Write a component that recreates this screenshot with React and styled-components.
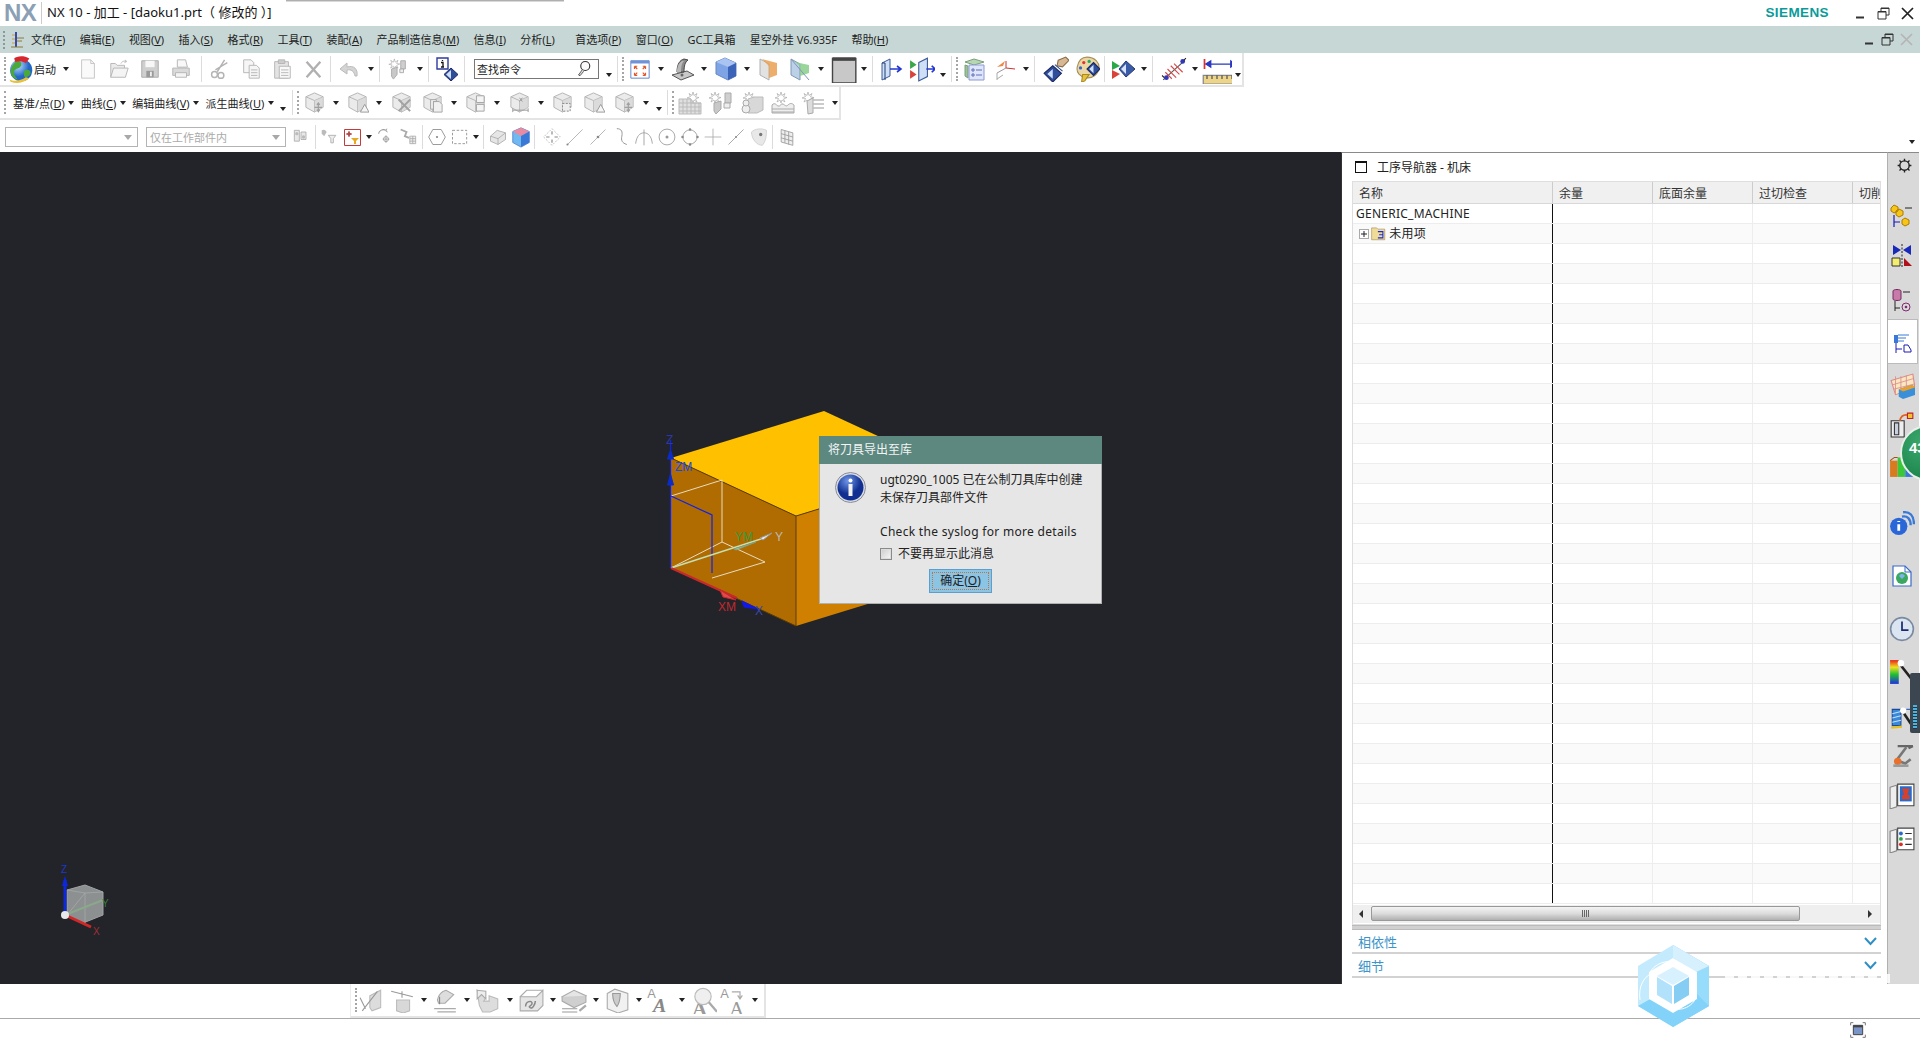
import React from 'react';
import styled, { createGlobalStyle } from 'styled-components';

const Global = createGlobalStyle`
  html, body { margin: 0; padding: 0; width: 1920px; height: 1040px; overflow: hidden; background: #fff; }
  body { font-family: "Noto Sans", "Noto Sans CJK SC", sans-serif; font-size: 11px; color: #222; }
  #root { width: 1920px; height: 1040px; }
`;
const Page = styled.div`position: relative; width: 1920px; height: 1040px; display: flex; flex-direction: column; overflow: hidden;`;
const TitleBar = styled.header`height: 26px; flex: none; display: flex; align-items: center; background: #fff; position: relative;`;
const TopShadow = styled.div`position: absolute; left: 286px; top: 0; width: 278px; height: 2px; background: linear-gradient(#999, #eee);`;
const Logo = styled.div`width: 37px; margin-left: 4px; font: bold 24px/26px "Liberation Sans", sans-serif; color: #8ba0b4; letter-spacing: -0.5px;`;
const TitleSep = styled.div`width: 1px; height: 22px; background: #ccc; margin-right: 5px;`;
const TitleText = styled.div`font: 13px/25px "Noto Sans", "Noto Sans CJK SC", sans-serif; color: #111; white-space: nowrap; align-self: flex-start;`;
const Brand = styled.div`margin-left: auto; font: bold 13.5px/26px "Liberation Sans", sans-serif; color: #0a9a9a; letter-spacing: 0.4px;`;
const WinBtns = styled.div`display: flex; align-items: center; margin-left: ${p => p.$ml}; margin-right: ${p => p.$mr}px; gap: ${p => p.$gap}px;`;
const MenuBar = styled.nav`height: 27px; flex: none; display: flex; align-items: center; background: #c7d7d5; padding-left: 3px;`;
const MenuGrip = styled.div`width: 3px; height: 18px; border-left: 2px dotted #8a9a98; margin-right: 1px;`;
const MenuList = styled.div`display: flex; gap: 14.4px; margin-left: 6px;`;
const MenuItem = styled.span`font-size: 11px; line-height: 25px; color: #222; white-space: nowrap; margin-left: ${p => p.$ml || 0}px; u { text-underline-offset: 1px; }`;
const ToolRow = styled.div`height: ${p => p.$h}px; flex: none; display: flex; align-items: stretch; background: #fff; position: relative;`;
const ToolBox = styled.div`display: flex; align-items: center; height: 100%; box-sizing: border-box; padding-left: ${p => p.$pl || 0}px; border-bottom: 2px solid #e4e4e4; border-right: 2px solid #e4e4e4; width: ${p => p.$w}px;`;
const Plain = styled.div`display: flex; align-items: center; height: 100%; box-sizing: border-box; padding: 2px 0 0 5px;`;
const Tool = styled.div`width: ${p => p.$w}px; height: 100%; flex: none; display: flex; align-items: center; justify-content: center;`;
const Spacer = styled.span`width: 3px; flex: none;`;
const Caret = styled.i`width: ${p => p.$w || 13}px; flex: none; display: flex; justify-content: center; transform: translateY(${p => p.$low ? 6 : 0}px);
  &::before { content: ""; border: 3px solid transparent; border-top: 4px solid #222; border-bottom: 0; }`;
const Sep = styled.div`width: 5px; flex: none; height: 80%; position: relative; &::before { content: ""; position: absolute; left: 2px; top: 0; bottom: 0; width: 1px; background: #dcdcdc; }`;
const Grip = styled.div`width: 4px; flex: none; height: 76%; border-left: 2px dotted #a5a5a5; box-sizing: border-box; margin-left: 2px; margin-right: -2px;`;
const TextBtn = styled.span`font-size: 11px; white-space: nowrap; color: #222; margin-left: ${p => p.$ml || 0}px;`;
const StartText = styled.span`font-size: 11px; width: 25px; flex: none; color: #222; white-space: nowrap;`;
const SearchBox = styled.div`height: 18px; flex: none; margin: 0 4px 0 7px; border: 1px solid #777; display: flex; align-items: center; justify-content: space-between; padding: 0 3px 0 2px; font-size: 11px; color: #222; width: 118px;`;
const Combo = styled.div`width: ${p => p.$w}px; height: 20px; flex: none; box-sizing: border-box; margin-right: ${p => p.$mr || 0}px; border: 1px solid #b4b4b4; display: flex; align-items: center; padding: 0 5px 0 3px; font-size: 11px; color: #aaa;
  &::after { content: ""; margin-left: auto; border: 4px solid transparent; border-top: 5px solid #a8a8a8; border-bottom: 0; }`;
const EdgeCaret = styled.div`position: absolute; right: 5px; top: 20px;`;
const Main = styled.main`height: 832px; flex: none; display: flex; position: relative;`;
const Viewport = styled.section`width: 1341px; flex: none; background: #222429; position: relative; overflow: hidden;`;
const Model = styled.svg`position: absolute; left: ${p => p.$x}px; top: ${p => p.$y}px;`;
const Dialog = styled.div`position: absolute; left: 819px; top: 284px; width: 283px; height: 168px; box-sizing: border-box; background: #e6e6e6; border: 1px solid #b0b0b0; border-top: 0; display: flex; flex-direction: column;`;
const DialogHead = styled.div`height: 28px; flex: none; margin: 0 -1px; background: #5d8880; color: #f2f5f4; font-size: 12px; line-height: 28px; padding-left: 9px;`;
const DialogBody = styled.div`display: flex; padding: 7px 0 0 15px; flex: 1; min-height: 0;`;
const DialogIcon = styled.div`width: 31px; flex: none; margin-right: 14px; padding-top: 1px;`;
const DialogCol = styled.div`flex: 1; display: flex; flex-direction: column; font-size: 12px; line-height: 18px; color: #222;`;
const DialogLine = styled.div`white-space: nowrap; margin-bottom: ${p => p.$mb || 0}px; letter-spacing: ${p => p.$ls || 0}px;`;
const CheckRow = styled.div`display: flex; align-items: center; gap: 6px; margin-top: 4px; height: 18px; font-size: 12px;`;
const CheckBox = styled.div`width: 10px; height: 10px; background: linear-gradient(135deg, #ccc, #f8f8f8); border: 1px solid #8a8a8a; outline: 1px solid #ddd; outline-offset: -2px;`;
const OkWrap = styled.div`display: flex; margin: 6px 0 0 49px;`;
const OkButton = styled.button`width: 63px; height: 24px; padding: 0; background: #8cc4e4; border: 1px solid #5ba0cc; font: 12px/20px "Noto Sans", "Noto Sans CJK SC", sans-serif; color: #222; position: relative;
  &::after { content: ""; position: absolute; inset: 2px; border: 1px dotted #b9764a; }`;
const Panel = styled.aside`width: 546px; flex: none; display: flex; flex-direction: column; background: #fff; border-top: 1px solid #8a8a8a; box-sizing: border-box; padding-left: 10px; padding-right: 6px; border-left: 1px solid #333; position: relative;`;
const PanelTitle = styled.div`height: 28px; flex: none; display: flex; align-items: center; padding-left: 3px; font-size: 12px; color: #222;`;
const WinBox = styled.span`width: 10px; height: 9px; border: 1px solid #111; border-top-width: 2px; margin-right: 10px;`;
const Table = styled.div`height: 744px; flex: none; box-sizing: border-box; border: 1px solid #dedede; overflow: hidden; display: flex; flex-direction: column;`;
const Head = styled.div`height: 22px; flex: none; display: flex; background: #f0f0f0; border-bottom: 1px solid #d8d8d8; box-sizing: border-box;`;
const HeadCell = styled.div`width: ${p => p.$w}px; flex: none; box-sizing: border-box; padding-left: 6px; font-size: 12px; line-height: 23px; color: #333; border-right: ${p => p.$last ? 0 : '1px solid #ccc'}; overflow: hidden; white-space: nowrap;`;
const Row = styled.div`height: 20px; flex: none; display: flex; box-sizing: border-box; background: ${p => p.$alt ? '#fafafa' : '#fff'}; border-bottom: 1px solid #ededed;`;
const Cell = styled.div`width: ${p => p.$w}px; flex: none; box-sizing: border-box; border-right: ${p => p.$last ? 0 : p.$name ? '1px solid #111' : '1px solid #ededed'}; font-size: 12px; line-height: 19px; color: #222; padding-left: ${p => p.$name ? 3 : 0}px; letter-spacing: ${p => p.$name ? .25 : 0}px; display: flex; align-items: center; white-space: nowrap;`;
const Plus = styled.span`width: 8px; height: 8px; border: 1px solid #aaa; margin: 0 2px 0 3px; position: relative; background: #fff;
  &::before { content: ""; position: absolute; left: 1px; right: 1px; top: 3px; height: 2px; background: #222; transform: scaleY(.5); }
  &::after { content: ""; position: absolute; top: 1px; bottom: 1px; left: 3px; width: 2px; background: #222; transform: scaleX(.5); }`;
const HScroll = styled.div`height: 18px; flex: none; margin-top: 1px; background: #efefef; display: flex; align-items: center; position: relative;`;
const Thumb = styled.div`position: absolute; left: 18px; width: 429px; top: 1px; height: 15px; box-sizing: border-box; border: 1px solid #999; border-radius: 2px; background: linear-gradient(#f4f4f4, #dcdcdc 50%, #b0b0b0); display: flex; align-items: center; justify-content: center;`;
const Grips = styled.span`width: 7px; height: 7px; background: repeating-linear-gradient(90deg, #666 0 1px, transparent 1px 2px);`;
const ScrollArrow = styled.span`position: absolute; ${p => p.$right ? 'right: 8px; border-left: 4px solid #333;' : 'left: 6px; border-right: 4px solid #333;'} border-top: 4px solid transparent; border-bottom: 4px solid transparent;`;
const Splitter = styled.div`height: 5px; flex: none; background: #d0d0d0; border: 1px solid #bbb; border-width: 1px 0; box-sizing: border-box;`;
const Section = styled.div`height: 24px; flex: none; box-sizing: border-box; border-bottom: 2px solid #d2d2d2; display: flex; align-items: center; justify-content: space-between; padding: 0 4px 0 6px; font-size: 13px; color: #3c94c8;`;
const SideStrip = styled.div`width: 32px; flex: none; background: #d9d9d9; border-left: 1px solid #b0b0b0; box-sizing: border-box; border-top: 1px solid #8a8a8a; display: flex; flex-direction: column; overflow: hidden;`;
const SideItem = styled.div`height: ${p => p.$h}px; flex: none; margin-top: ${p => p.$mt || 0}px; width: ${p => p.$active ? 30 : 31}px; box-sizing: border-box; display: flex; align-items: center; justify-content: center; padding-right: ${p => p.$active ? 0 : 4}px; padding-left: ${p => p.$pl || 0}px;
  ${p => p.$active ? 'background: #fff; border: 1px solid #bbb; border-left: 0;' : ''}`;
const Badge = styled.div`position: absolute; right: -36px; top: 273px; width: 56px; height: 56px; border-radius: 50%; background: radial-gradient(circle at 40% 30%, #3ca86c, #137c44); border: 2px solid #e8efe9; box-sizing: border-box; color: #fff; font: bold 15px/42px "Liberation Sans", sans-serif; padding-left: 7px;`;
const Meter = styled.div`position: absolute; right: 0; top: 521px; width: 10px; height: 60px; background: #3b4650; border-radius: 2px 0 0 2px; box-sizing: border-box; padding: 4px 3px; display: flex; align-items: flex-end;`;
const MeterBars = styled.div`width: 100%; height: 46%; background: repeating-linear-gradient(#4bb3e0 0 2px, #2a343c 2px 3px);`;
const BottomBar = styled.div`height: 35px; flex: none; display: flex; background: #fff; border-bottom: 1px solid #aaa; box-sizing: border-box;`;
const BottomBox = styled.div`margin-left: 350px; width: 416px; box-sizing: border-box; display: flex; align-items: center; border-bottom: 2px solid #e4e4e4; border-right: 2px solid #e4e4e4; border-left: 1px solid #eee; padding-left: 2px;`;
const StatusBar = styled.footer`flex: 1; display: flex; align-items: center; justify-content: flex-end; padding-right: 54px; background: #fff;`;
const Watermark = styled.svg`position: absolute; left: 1630px; top: 940px;`;
const FaintText = styled.div`position: absolute; left: 1725px; top: 974px; width: 165px; height: 9px; background: repeating-linear-gradient(90deg, rgba(255,255,255,.85) 0 9px, transparent 9px 13px);`;

const Svg = ({ s = 22, vb = 24, children }) => <svg width={s} height={s} viewBox={`0 0 ${vb} ${vb}`} fill="none">{children}</svg>;
const E = '#b4b4b4', F = '#ebebeb', D = '#d4d4d4';

const cubeBase = <>
  <path d="M12 2l9 4v11l-9 5-9-5V6z" fill={F} stroke={E} />
  <path d="M3 6l9 4 9-4M12 10v12" stroke={E} />
  <path d="M12 10l9-4v11l-9 5z" fill={D} opacity=".7" />
</>;
const overlays = {
  arrows: <path d="M16 13v8M12 17h8M14.5 14.5l1.5-2 1.5 2M14.5 19.5l1.5 2 1.5-2" stroke="#a0a0a0" strokeWidth="1.3" />,
  tri: <path d="M15 22l4.5-8 4.5 8z" fill="#f5f5f5" stroke="#999" />,
  x: <path d="M9 9l12 12M21 9L9 21" stroke="#a2a2a2" strokeWidth="2.2" />,
  doc: <path d="M13 11h6l3 3v8h-9zM10 9h6v2h-3v8h-3z" fill="#f0f0f0" stroke="#a5a5a5" />,
  panel: <path d="M13 5h8v7h-8zM13 14h8v7h-8z" fill="#f4f4f4" stroke="#a5a5a5" />,
  dim: <path d="M5 20h16M5 18v4M21 18v4M12 7l3 4M15 7l-3 4" stroke="#999" />,
  corner: <path d="M12 13h8v8h-8z" fill="#eee" stroke="#888" strokeDasharray="2 1.5" />,
};
const Cube = ({ k }) => <Svg s={23}>{cubeBase}{overlays[k]}</Svg>;
const Spark = () => <path d="M6 1l1 3.5 3-2-1.5 3.5 3.5.5-3.5 1.5L10 11 7 9l-1 3-1-3-3 2 1.5-3.5L0 7l3.5-1.5L2 2.5l3 2z" fill="#fff" stroke="#aaa" strokeWidth=".7" />;

const ICONS = {
  globe: <Svg s={28}><defs><radialGradient id="gl" cx=".35" cy=".3"><stop offset="0" stopColor="#bde3ff" /><stop offset="1" stopColor="#2266c8" /></radialGradient></defs><circle cx="13" cy="13" r="9.5" fill="url(#gl)" /><path d="M8 6c3-2 6 0 5 3s-5 2-6 5 2 5 3 7c-4-1-6-3-6-7 0-3 2-6 4-8zM16 13c3-1 5 0 5 2s-2 4-4 4-2-4-1-6z" fill="#4aa93a" /><path d="M7 3c2-2 8-3 13 0l-3 4c-3-2-6-2-9-1z" fill="#d9262c" /><path d="M3 21c4 2 10 1 14-2l3 1c-5 4-11 5-16 3z" fill="#e9c13a" /></Svg>,
  doc: <Svg><path d="M5 2h10l4 4v16H5z" fill="#fafafa" stroke="#c4c4c4" /><path d="M15 2v4h4" stroke="#c4c4c4" /></Svg>,
  open: <Svg><path d="M3 21V6h5l2 2h8v3" fill={F} stroke={E} /><path d="M3 21l3-10h16l-3 10z" fill="#f4f4f4" stroke={E} /><path d="M14 6c2-3 4-3 6-2l-1-2M20 4l-2 1" stroke={E} /></Svg>,
  save: <Svg><path d="M3 3h18v18H3z" fill="#cfcfcf" stroke="#a8a8a8" /><path d="M7 3h10v7H7z" fill="#f7f7f7" /><path d="M8 14h8v7H8z" fill="#9a9a9a" /><path d="M12 15h2v5h-2z" fill="#eee" /></Svg>,
  print: <Svg><path d="M8 2h9l2 8H8z" fill="#f8f8f8" stroke={E} /><path d="M3 11h18v8H3z" fill="#dadada" stroke={E} /><path d="M6 16h12v5H6z" fill="#f4f4f4" stroke={E} /></Svg>,
  cut: <Svg><path d="M17 2L9 15M20 5L7 13" stroke={E} strokeWidth="1.6" /><circle cx="6" cy="18" r="3.2" stroke={E} strokeWidth="1.6" /><circle cx="13" cy="19" r="3.2" stroke={E} strokeWidth="1.6" /></Svg>,
  copy: <Svg><path d="M4 2h8l3 3v11H4z" fill="#f6f6f6" stroke={E} /><path d="M10 8h8l3 3v11H10z" fill="#f6f6f6" stroke={E} /><path d="M12 13h7M12 16h7M12 19h7" stroke={E} /></Svg>,
  paste: <Svg><path d="M4 4h15v18H4z" fill="#e4e4e4" stroke={E} /><path d="M8 2h7v4H8z" fill="#ccc" stroke={E} /><path d="M9 9h12v13H9z" fill="#f8f8f8" stroke={E} /><path d="M11 13h8M11 16h8M11 19h8" stroke={E} /></Svg>,
  del: <Svg><path d="M5 4l15 17M20 4L5 21" stroke="#b0b0b0" strokeWidth="2.6" /></Svg>,
  undo: <Svg s={24}><path d="M20 19c1-7-3-11-10-9V6l-7 6 7 5v-4c4-1 7 1 8 6z" fill="#d4d4d4" stroke="#bbb" /></Svg>,
  drill: <Svg><g transform="translate(2 0)"><Spark /></g><path d="M15 3h5v9h-5z" fill="#cfcfcf" stroke="#aaa" /><path d="M5 12l6-2v8l-4 5-2-3z" fill="#c9c9c9" stroke="#aaa" /><path d="M14 12h4v4h-4z" fill="#eee" stroke="#aaa" /></Svg>,
  info: <Svg s={24}><path d="M2 1h11v11H2z" fill="#fff" stroke="#303a9e" strokeWidth="1.4" /><path d="M7.5 3v1M6 5.5h2v4.5M6 10h3" stroke="#111" strokeWidth="1.3" /><path d="M16 11l7 6.5-7 6.5-7-6.5z" fill="#2e4d9a" stroke="#222a60" /><path d="M16 13v9l-5-4.5z" fill="#cfe0ff" /></Svg>,
  fit: <Svg><path d="M2 3h20v19H2z" fill="#fff" stroke="#5a7fc8" /><path d="M2 3h20v3H2z" fill="#6f93d8" /><path d="M6 9l3 3M18 9l-3 3M6 19l3-3M18 19l-3-3M6 9h3M6 9v3M18 9h-3M18 9v3M6 19h3M6 19v-3M18 19h-3M18 19v-3" stroke="#e2562a" strokeWidth="1.3" /></Svg>,
  shade: <Svg s={24}><path d="M1 18l9 5 13-5-7-4z" fill="#c8c8c8" stroke="#555" /><path d="M6 15C6 7 9 3 13 2l4 1c-3 2-4 6-4 12z" fill="#8a8a8a" stroke="#444" /><path d="M6 15c0-6 2-9 5-11l2 0c-2 2-3 5-3 11z" fill="#b8b8b8" /><circle cx="11" cy="18" r="1.5" fill="#666" /></Svg>,
  cube: <Svg s={24}><path d="M11 1l11 5v13l-8 4L2 17V5z" fill="#7fa4e6" stroke="#6587c4" /><path d="M2 5l12 5 8-4-11-5z" fill="#a9c3f2" /><path d="M14 10l8-4v13l-8 4z" fill="#3b64b8" /></Svg>,
  fold: <Svg s={24}><path d="M3 2l9 5v16l-9-5z" fill="#e2e2e2" stroke="#b0b0b0" /><path d="M5 2l15 4v12l-8 3V9z" fill="#e9a050" opacity=".85" /></Svg>,
  fold2: <Svg s={24}><path d="M3 2l9 5v16l-9-5z" fill="#bcd0e8" stroke="#7f98b4" /><path d="M7 5l14 3v8l-9 3V9z" fill="#88cf8a" opacity=".85" /><path d="M3 2l18 21" stroke="#7f98b4" /></Svg>,
  win: <Svg s={28}><path d="M3 3h20v21H3z" fill="#c8c8c8" stroke="#444" strokeWidth="1.2" /><path d="M3 2h20v3H3z" fill="#444" /></Svg>,
  door1: <Svg s={24}><path d="M3 6l8-4v17l-8 4z" fill="#cfe0f6" stroke="#3a5a96" /><path d="M3 6l3 0v17" stroke="#223a70" /><path d="M11 12h10M18 9l4 3-4 3" stroke="#2438d0" strokeWidth="1.6" /></Svg>,
  door2: <Svg s={26}><path d="M1 4l6 4-6 4z" fill="#3aa84a" /><path d="M1 13l6 4-6 4z" fill="#d8443c" /><path d="M9 6l8-4v17l-8 4z" fill="#cfe0f6" stroke="#3a5a96" /><path d="M16 12h8M21 9l3 3-3 3" stroke="#2438d0" strokeWidth="1.6" /></Svg>,
  layers: <Svg s={24}><path d="M3 5l9-3 10 3-10 3z" fill="#b6d6b4" stroke="#7aa078" /><path d="M3 8v11l3 2V9z" fill="#9ec09c" stroke="#7aa078" /><path d="M7 8h15v15H7z" fill="#dfe6fa" stroke="#8a9ad4" /><path d="M10 12h2v2h-2zM10 17h2v2h-2zM14 13h6M14 18h6" stroke="#606fba" /></Svg>,
  csys: <Svg s={24}><path d="M13 11l9 1M13 11V4" stroke="#c33" strokeWidth="1" /><path d="M13 11L4 16" stroke="#999" /><path d="M4 23v-7M4 22l6-4" stroke="#aaa" /><path d="M4 10l8-6-2 5z" fill="#e98a4a" /></Svg>,
  hand: <Svg s={26}><path d="M14 4l7-3 3 3-6 6-5-1z" fill="#d7b894" stroke="#8a6a44" /><path d="M11 8l7 6" stroke="#2e4d9a" /><path d="M9 9l8 7-8 8-8-8z" fill="#2e4d9a" stroke="#1d2a60" /><path d="M9 12v9l-5-4.5z" fill="#cfe0ff" /></Svg>,
  palette: <Svg s={26}><path d="M12 1c7 0 12 5 11 11-1 5-6 9-12 8-6-1-9-5-8-10 1-5 4-9 9-9z" fill="#ecd6a4" stroke="#a6905a" /><circle cx="9" cy="6" r="1.5" fill="#d33" /><circle cx="14" cy="5" r="1.5" fill="#2a6" /><circle cx="6" cy="11" r="1.5" fill="#36c" /><path d="M18 6l6 6-6 6-6-6z" fill="#2e4d9a" stroke="#1d2a60" /><path d="M18 8v8l-4-4z" fill="#cfe0ff" /><path d="M8 17l-1 7 3-1 4-6z" fill="#e8c040" stroke="#a88a20" /></Svg>,
  play: <Svg s={24}><path d="M1 4l8 5-8 4z" fill="#2aa84a" /><path d="M1 13l8 4-8 5z" fill="#d8443c" /><path d="M15 4l9 8-9 8-7-8z" fill="#3a5ca8" stroke="#2a3a70" /><path d="M15 7v10l-5-5z" fill="#d8e4ff" /></Svg>,
  hatch: <Svg s={26}><path d="M2 22L22 4" stroke="#555" /><path d="M6 12l8 8M9 9l8 8M12 7l8 8M4 15l6 6" stroke="#d84848" /><circle cx="5" cy="20" r="2.2" fill="#3238b8" /><circle cx="20" cy="5" r="2.2" fill="#3238b8" /><path d="M1 18l2 2M23 2l-2 2" stroke="#222" /></Svg>,
  ruler: <Svg s={30}><path d="M2 4v8M28 4v8" stroke="#d33" strokeWidth="1.4" /><path d="M3 8h24M3 8l4-2.5v5zM27 8l-4-2.5v5z" fill="#2a38c0" stroke="#2a38c0" /><path d="M1 17h28v7H1z" fill="#ecd48a" stroke="#888" /><path d="M4 17v3M8 17v3M12 17v3M16 17v3M20 17v3M24 17v3" stroke="#555" /></Svg>,
  mag: <Svg s={18}><circle cx="11" cy="8" r="6" fill="#fafafa" stroke="#333" strokeWidth="1.5" /><path d="M7 13l-5 7 2 1 5-6" fill="#ddd" stroke="#333" /></Svg>,
  spkGrid: <Svg s={24}><g transform="translate(9 0)"><Spark /></g><path d="M1 8h12v4h10v11H1z" fill="#e0e0e0" stroke="#bbb" /><path d="M1 12h22M1 16h22M1 20h22M5 8v15M9 8v15M13 8v15M17 12v11M21 12v11" stroke="#bbb" /></Svg>,
  spkDrill: <Svg s={24}><Spark /><path d="M16 2h6v10h-6z" fill="#d0d0d0" stroke="#aaa" /><path d="M5 12l7-2v8l-5 5-2-3z" fill="#c8c8c8" stroke="#aaa" /><path d="M15 12h6v5h-6z" fill="#eee" stroke="#aaa" /></Svg>,
  spkBlock: <Svg s={24}><g transform="translate(3 0)"><Spark /></g><path d="M8 8l6-2h9v13l-6 3H8z" fill="#d8d8d8" stroke="#bbb" /><circle cx="6" cy="18" r="4" fill="#eee" stroke="#aaa" /><circle cx="6" cy="12" r="3" fill="#eee" stroke="#aaa" /></Svg>,
  spkWave: <Svg s={24}><g transform="translate(4 0)"><Spark /></g><path d="M1 14c3-3 4 0 6 1s3-3 5-2 3 3 5 1 4-2 6 0v8H1z" fill="#eee" stroke="#aaa" /><path d="M1 18h22M1 21h22" stroke="#aaa" /></Svg>,
  spkLines: <Svg s={24}><Spark /><path d="M5 10l6-3v15l-5 1z" fill="#ddd" stroke="#aaa" /><path d="M11 9h11M11 13h11M11 17h11" stroke="#bbb" strokeWidth="1.4" /></Svg>,
  chain: <Svg s={20}><path d="M4 4h6v13H4zM12 6h6v9h-6z" fill="#e8e8e8" stroke="#aaa" /><circle cx="7" cy="8" r="2" fill="#bbb" /><circle cx="15" cy="12" r="2" fill="#bbb" /></Svg>,
  filt1: <Svg s={20}><path d="M2 4c3-2 5 0 6 2l-3 5-3-3z" fill="#bbb" /><path d="M10 10h9l-3 4v5h-3v-5z" fill="#eee" stroke="#aaa" /></Svg>,
  filt2: <svg width="17" height="17" viewBox="0 0 17 17" fill="none"><path d="M.5.5h16v16H.5z" stroke="#c43a3a" /><path d="M5 2v6M2 5h6" stroke="#a33" /><circle cx="5" cy="5" r="1.3" stroke="#a33" /><path d="M7 9h8l-3 3v3h-2v-3z" fill="#e8a820" /></svg>,
  rot: <Svg s={20}><path d="M3 8c1-4 5-6 9-4" stroke="#999" strokeWidth="1.3" /><path d="M12 10v9M8 14.5h8M13 2l-1 3 2 1" stroke="#999" /><circle cx="12" cy="14.5" r="3" stroke="#999" /></Svg>,
  filt3: <Svg s={20}><path d="M2 3l7 3-2 5 5 2" stroke="#aaa" strokeWidth="2.2" /><path d="M13 11h7v9h-7z" fill="#eee" stroke="#aaa" /><path d="M13 14h7M13 17h7M16.5 11v9" stroke="#aaa" /></Svg>,
  hex: <Svg s={20}><path d="M7 3h10l5 9-5 9H7l-5-9z" fill="#fff" stroke="#888" /><circle cx="12" cy="12" r="1.3" fill="#888" /></Svg>,
  dash: <Svg s={20}><path d="M3 4h17v16H3z" stroke="#888" strokeDasharray="3 2" /></Svg>,
  box3: <Svg s={20}><path d="M3 11l8-7 10 3v8l-9 6-9-4z" fill="#e6e6e6" stroke="#aaa" /><path d="M3 11l9 3 9-7M12 14v7" stroke="#aaa" /></Svg>,
  box4: <Svg s={22}><path d="M12 2l9 4v12l-9 5-9-5V6z" fill="#6fb8f0" stroke="#5a88d0" /><path d="M3 6l9 5 9-5-9-4z" fill="#ea8aa0" /><path d="M12 11l9-5v12l-9 5z" fill="#3a78d8" /></Svg>,
  snap1: <Svg s={20}><path d="M12 2l10 10-10 10L2 12z" stroke="#bbb" strokeDasharray="2.5 1.5" /><path d="M12 5v4M12 15v4M5 12h4M15 12h4" stroke="#888" strokeWidth="1.4" /></Svg>,
  snap2: <Svg s={20}><path d="M3 21L21 3" stroke="#aaa" /><circle cx="3" cy="21" r="1.3" fill="#888" /></Svg>,
  snap3: <Svg s={20}><path d="M3 21L21 3" stroke="#aaa" /><circle cx="12" cy="12" r="1.6" fill="#888" /></Svg>,
  snap4: <Svg s={20}><path d="M7 2c6 0 7 4 6 9s0 8 6 10" stroke="#999" strokeWidth="1.2" /></Svg>,
  snap5: <Svg s={20}><path d="M2 20c1-9 5-13 10-13s9 4 10 13M12 3v19" stroke="#999" /></Svg>,
  snap6: <Svg s={20}><circle cx="12" cy="12" r="9.5" stroke="#999" /><circle cx="12" cy="12" r="1.8" fill="#999" /></Svg>,
  snap7: <Svg s={20}><circle cx="12" cy="12" r="8.5" stroke="#999" /><circle cx="12" cy="3" r="1.5" fill="#888" /><circle cx="12" cy="21" r="1.5" fill="#888" /><circle cx="3" cy="12" r="1.5" fill="#888" /><circle cx="21" cy="12" r="1.5" fill="#888" /></Svg>,
  snap8: <Svg s={20}><path d="M12 2v20M2 12h20" stroke="#aaa" /></Svg>,
  snap9: <Svg s={20}><path d="M3 21L21 3" stroke="#999" /><circle cx="12" cy="12" r="1.2" fill="#888" /></Svg>,
  snap10: <Svg s={20}><path d="M3 6c4-4 12-5 18-2 0 7-1 14-5 18C9 22 3 14 3 6z" fill="#e8e8e8" stroke="#ccc" /><circle cx="14" cy="9" r="2" fill="#777" /></Svg>,
  grid: <Svg s={20}><path d="M5 3l14 4v15L5 18z" fill="#eee" stroke="#999" /><path d="M9.5 4.5V19M14 6v15M5 8l14 4M5 13l14 4" stroke="#999" /></Svg>,
  dimBox: <Svg s={26}><path d="M10 8l10-5v16l-8 3-2-3z" fill="#dcdcdc" stroke="#bbb" /><path d="M3 22L17 4M1 10l5 10" stroke="#999" /></Svg>,
  dimBox2: <Svg s={26}><path d="M7 12h12v10l-6 2-6-2z" fill="#d8d8d8" stroke="#bbb" /><path d="M2 4l20 5M12 4v6" stroke="#999" /></Svg>,
  contour: <Svg s={26}><path d="M5 12c1-5 4-8 8-9l7 4-8 8H6z" fill="#ddd" stroke="#aaa" /><path d="M2 20h20M5 23h17" stroke="#aaa" strokeWidth="1.2" /><path d="M7 9v7" stroke="#888" /></Svg>,
  faceCut: <Svg s={26}><path d="M2 3l8 7-2 3 5 0 0 -5 8 3v9l-7 3H7l-3-6z" fill="#ddd" stroke="#bbb" /><path d="M2 3v8l4-4 4 4V4z" fill="#eee" stroke="#aaa" /></Svg>,
  swirl: <Svg s={26}><path d="M2 9h15l6-6v14l-5 5H2z" fill="#e5e5e5" stroke="#aaa" /><path d="M2 9l6-6h15" stroke="#aaa" /><path d="M7 18c0-5 6-6 6-3s-4 2-2 4 5-3 5-6" stroke="#888" strokeWidth="1.4" /></Svg>,
  slab: <Svg s={26}><path d="M1 9l11-6 11 5-11 6z" fill="#e5e5e5" stroke="#aaa" /><path d="M1 9v4l11 6 11-5V8" fill="#cfcfcf" stroke="#aaa" /><path d="M1 20h14M1 23h14" stroke="#999" /><path d="M17 22l6-5" stroke="#aaa" strokeWidth="2" /></Svg>,
  pocket: <Svg s={26}><path d="M3 6l7-4 12 4v15l-9 3-10-4z" fill="#f1f1f1" stroke="#aaa" /><path d="M8 6h7c0 5-1 9-3 12-3-3-4-8-4-12z" fill="#ccc" stroke="#999" /></Svg>,
  txt1: <Svg s={28}><text x="1" y="10" fontSize="11" fontFamily="Liberation Sans" fill="#999">A</text><text x="6" y="22" fontSize="17" fontStyle="italic" fontWeight="bold" fontFamily="Liberation Serif" fill="#888">A</text><path d="M4 25h19" stroke="#888" /></Svg>,
  txt2: <Svg s={28}><text x="3" y="25" fontSize="17" fontFamily="Liberation Serif" fontWeight="bold" fill="#999">A</text><circle cx="12" cy="9" r="7" fill="#efefef" stroke="#bbb" /><path d="M17 14l7 8" stroke="#aaa" strokeWidth="2" /></Svg>,
  txt3: <Svg s={28}><text x="1" y="10" fontSize="11" fontFamily="Liberation Sans" fill="#999">A</text><text x="9" y="25" fontSize="17" fontFamily="Liberation Serif" fill="#999">A</text><path d="M11 5h7l0 5M16 8l2 3 2-3" stroke="#aaa" /></Svg>,
  gear: <Svg s={15}><circle cx="12" cy="12" r="7.5" stroke="#222" strokeWidth="2.2" /><path d="M12 1v4M12 19v4M1 12h4M19 12h4M4 4l3 3M17 17l3 3M4 20l3-3M17 7l3-3" stroke="#222" strokeWidth="2.2" /></Svg>,
  sGeom: <Svg s={24}><path d="M1 4l3-3 4 2v4l-4 2-3-2zM6 7l3-2 4 2v4l-4 2-3-2z" fill="#f5c518" stroke="#b07a00" /><path d="M15 4h7" stroke="#222" /><path d="M4 11v12M4 18h6" stroke="#1a1ab8" strokeWidth="1.2" /><path d="M12 16l3-2 4 2v4l-4 2-3-2z" fill="#f5c518" stroke="#b07a00" /></Svg>,
  sMir: <Svg s={24}><path d="M3 1l8 5-8 5zM21 1l-8 5 8 5z" fill="#1a2ab8" /><path d="M12 0v24" stroke="#222" strokeDasharray="2 1.5" /><path d="M2 14h8v8H2z" fill="#f4ee70" stroke="#333" /><path d="M14 22v-8l8 8z" fill="#b0101a" /></Svg>,
  sCyl: <Svg s={24}><path d="M3 3c0-2 8-2 8 0v8c0 2-8 2-8 0z" fill="#c87aa8" stroke="#702a60" /><path d="M5 13v10M5 20h5M13 4h7" stroke="#222" /><circle cx="16" cy="19" r="4" stroke="#802a70" /><circle cx="16" cy="19" r="1.3" fill="#802a70" /></Svg>,
  sTool: <Svg s={24}><path d="M3 5h4v8H3z" fill="#3a78d8" /><path d="M7 5h11M7 8h8M7 11h6" stroke="#3a78d8" /><path d="M5 13v10M5 19h6" stroke="#1a1ab8" /><path d="M13 15h4l3 5v2h-7z" fill="#fff" stroke="#1a1ab8" /></Svg>,
  sTable: <Svg s={26}><path d="M2 7L22 1l2 13L6 20z" fill="#fbe6c0" stroke="#d88" /><path d="M6 3v16M11 3v14M16 2v14M3 11l20-6M4 15l20-5" stroke="#d89090" strokeWidth=".8" /><path d="M9 15l12-4 4 2v7l-12 4-4-2z" fill="#3a90d8" /><path d="M9 15l4 2 12-4-4-2z" fill="#e8a030" /></Svg>,
  sMach: <Svg s={26}><path d="M2 8h12v15H2z" fill="#eee" stroke="#333" /><path d="M5 10h4v11H5z" fill="#c8d0e0" stroke="#333" /><path d="M10 8c1-4 4-6 8-5" stroke="#e06020" strokeWidth="1.6" /><path d="M17 1h5v5h-5z" fill="#f4c030" stroke="#c02020" /></Svg>,
  sBooks: <Svg s={26}><path d="M1 8h7v15H1z" fill="#d87a20" /><path d="M8 5h7v18H8z" fill="#3ac83a" /><path d="M15 8h8v15h-8z" fill="#3a78d8" /><path d="M1 8l4-3h3" stroke="#a05010" /></Svg>,
  sInfo: <Svg s={26}><path d="M12 7c5-1 8 2 8 8M13 3c6-1 10 3 10 11" stroke="#3a78d8" strokeWidth="2.2" /><circle cx="9" cy="16" r="8" fill="#2a66d8" /><path d="M9 11v1M9 14v6" stroke="#fff" strokeWidth="2.6" /></Svg>,
  sDoc: <Svg s={24}><path d="M3 2h12l6 6v14H3z" fill="#fff" stroke="#3a6ac8" strokeWidth="1.2" /><path d="M15 2v6h6" stroke="#3a6ac8" /><circle cx="12" cy="14" r="6" fill="#3aa860" /><path d="M9 12c2-3 5-2 6 0l-3 3z" fill="#7fb4e8" /></Svg>,
  sClock: <Svg s={26}><circle cx="12" cy="12" r="10.5" fill="#dbe5f2" stroke="#7a8aa0" strokeWidth="1.5" /><path d="M12 5v8h6" stroke="#1a2a70" strokeWidth="1.6" /></Svg>,
  sRain: <Svg s={26}><defs><linearGradient id="rb" x1="0" x2="0" y1="0" y2="1"><stop offset="0" stopColor="#e8201a" /><stop offset=".3" stopColor="#f0e020" /><stop offset=".6" stopColor="#20c030" /><stop offset="1" stopColor="#2030e0" /></linearGradient></defs><path d="M1 1h8v22H1z" fill="url(#rb)" /><path d="M11 6l11 14" stroke="#222" strokeWidth="2.4" /><circle cx="11" cy="4" r="3" fill="#fff" /></Svg>,
  sMill: <Svg s={26}><path d="M3 4h8v15H3z" fill="#3a88d8" stroke="#1a4a98" /><path d="M3 8l8-2M3 12l8-2M3 16l8-2" stroke="#bfe0ff" /><path d="M2 21l10-1" stroke="#e8c020" strokeWidth="2" /><path d="M14 8l8 12" stroke="#222" strokeWidth="2.4" /><circle cx="13" cy="5" r="2.8" fill="#fff" /><path d="M16 4h8l-2 5" stroke="#3a68c8" /></Svg>,
  sRobot: <Svg s={26}><path d="M8 2h14l-4 2" stroke="#666" strokeWidth="2" /><path d="M16 3L7 15l8 3 5-4" stroke="#777" strokeWidth="2.4" /><circle cx="8" cy="16" r="3.4" fill="#e8702a" /><path d="M4 20h14" stroke="#999" strokeWidth="2.4" /></Svg>,
  sDoor1: <Svg s={26}><path d="M1 4l6-2v20l-6 2z" fill="#eee" stroke="#888" /><path d="M8 1h15v20H8z" fill="#fff" stroke="#444" /><path d="M10 3h11v14H10z" fill="#2a6ac8" /><path d="M12 5h7l-2 6h2v4h-7v-4h2z" fill="#d8402a" /></Svg>,
  sDoor2: <Svg s={26}><path d="M1 4l6-2v20l-6 2z" fill="#eee" stroke="#888" /><path d="M8 1h15v20H8z" fill="#fff" stroke="#444" /><circle cx="11" cy="6" r="1.8" fill="#2a6ac8" /><circle cx="11" cy="11" r="1.8" fill="#2aa84a" /><circle cx="11" cy="16" r="1.8" fill="#d8302a" /><path d="M15 6h6M15 11h6M15 16h6" stroke="#333" /></Svg>,
  max: <Svg s={16}><path d="M1 5V1h4M19 1h4v4M1 19v4h4M23 19v4h-4" stroke="#777" strokeWidth="1.5" /><path d="M5 5h14v14H5z" fill="#7a94c8" stroke="#444" strokeWidth="1.5" /><path d="M5 5h14v3H5z" fill="#444" /></Svg>,
  folder: <Svg s={15}><path d="M1 3h8l2 2h11v17H1z" fill="#f0dc9a" stroke="#a58c4a" /><path d="M11 9h8v10h-8M13 14h6" stroke="#1a2ad8" strokeWidth="1.7" /></Svg>,
};

const renderItems = (items, w = 31, cw = 13) => items.map((it, i) => {
  if (it === '|') return <Sep key={i} />;
  if (it === ':') return <Grip key={i} />;
  if (it === '+') return <Spacer key={i} />;
  if (it === 'v') return <Caret key={i} $w={cw} />;
  if (it === '_') return <Caret key={i} $w={cw} $low />;
  if (typeof it === 'string') return <Tool key={i} $w={w}>{ICONS[it]}</Tool>;
  return <Tool key={i} $w={w}>{it}</Tool>;
});

const menu = [['文件', 'F'], ['编辑', 'E'], ['视图', 'V'], ['插入', 'S'], ['格式', 'R'], ['工具', 'T'], ['装配', 'A'], ['产品制造信息', 'M'], ['信息', 'I'], ['分析', 'L'], ['首选项', 'P', 6], ['窗口', 'O'], ['GC工具箱'], ['星空外挂 V6.935F'], ['帮助', 'H']];

const Lbl = ({ t, k }) => <>{t}(<u>{k}</u>)</>;

const WinIcons = ({ close }) => <>
  <svg width="11" height="11" viewBox="0 0 11 11"><path d="M1 9.5h8" stroke="#333" strokeWidth="2" /></svg>
  <svg width="13" height="13" viewBox="0 0 13 13" fill="none"><path d="M4 4V1h8v7H9" stroke="#333" /><path d="M1 4.5h8v7.5H1z" stroke="#333" /><path d="M1 5h8M4 1.5h8" stroke="#333" /></svg>
  <svg width="13" height="13" viewBox="0 0 13 13"><path d="M1 1l11 11M12 1L1 12" stroke={close} strokeWidth="1.7" /></svg>
</>;

const Chevron = ({ c }) => <svg width="13" height="9" viewBox="0 0 13 9" fill="none"><path d="M1 1l5.5 6L12 1" stroke={c} strokeWidth="2" /></svg>;

const sideItems = [
  { i: 'gear', h: 30, mt: -3, pl: 6 }, { i: 'sGeom', h: 40, mt: 16 }, { i: 'sMir', h: 40 }, { i: 'sCyl', h: 39, mt: 4 }, { i: 'sTool', h: 45, active: true },
  { i: 'sTable', h: 40, mt: 2 }, { i: 'sMach', h: 38 }, { i: 'sBooks', h: 40, mt: 1 }, { i: 'sInfo', h: 40, mt: 17 }, { i: 'sDoc', h: 40, mt: 14 },
  { i: 'sClock', h: 40, mt: 13 }, { i: 'sRain', h: 40, mt: 3 }, { i: 'sMill', h: 40, mt: 6 }, { i: 'sRobot', h: 38 }, { i: 'sDoor1', h: 40 }, { i: 'sDoor2', h: 40, mt: 4 },
];

const colW = [200, 100, 100, 100, 27];
const heads = ['名称', '余量', '底面余量', '过切检查', '切削'];

function CubeModel() {
  return (
    <Model $x={640} $y={228} width="330" height="270" viewBox="640 380 330 270">
      <path d="M824 411L671 458 796 516 949 469z" fill="#ffc000" />
      <path d="M671 458l125 58v110l-125-58z" fill="#b06c00" />
      <path d="M796 516l153-47v110l-153 47z" fill="#d08000" />
      <path d="M796 516v110M671 458l125 58M796 516l153-47M671 568l125 58" stroke="#5a3c08" strokeWidth="1" fill="none" />
      <path d="M671 496l51-16v62l43 20-53 16M722 542l-51 26" stroke="#e8dcc4" strokeWidth="1" fill="none" />
      <path d="M671 496l41 19v58" stroke="#0c22f0" strokeWidth="1.2" fill="none" />
      <path d="M670.5 568V440" stroke="#0c22f0" strokeWidth="1.3" />
      <path d="M670.5 450l-3 9h6zM670.5 474l-3 11h6z" fill="#0c2cc8" stroke="#0c2cc8" />
      <path d="M671 568l93-30" stroke="#c4e0b4" strokeWidth="1.6" />
      <path d="M734 549l22-7-20 8z" fill="#b4d8a4" stroke="#7f9f7f" />
      <path d="M760 538l12-5-9 7z" fill="#e8e8e8" stroke="#999" />
      <path d="M671 568l66 30" stroke="#c8282c" strokeWidth="2.2" />
      <path d="M720 590l16 10-13-3z" fill="#e04a4a" stroke="#c8282c" />
      <path d="M742 601l16 8-14-2z" fill="#1018e8" stroke="#1018e8" />
      <g fontFamily="Liberation Sans" fontSize="12">
        <text x="666" y="444" fill="#2a38a8">Z</text>
        <text x="675" y="471" fill="#1a48e0">ZM</text>
        <text x="735" y="541" fill="#389838">YM</text>
        <text x="775" y="541" fill="#bbb">Y</text>
        <text x="718" y="611" fill="#c02a2e">XM</text>
        <text x="755" y="615" fill="#3a48b0">X</text>
      </g>
    </Model>
  );
}

function Triad() {
  return (
    <Model $x={40} $y={708} width="80" height="90" viewBox="40 860 80 90">
      <path d="M67 890l18-5 18 7v23l-20 8-16-8z" fill="#8d9090" stroke="#a0a4a4" />
      <path d="M67 890l18 3 18-1M85 893v30M67 915l18-22" stroke="#a8acac" strokeWidth=".7" fill="none" />
      <path d="M65 915l38-15" stroke="#8aa88a" strokeWidth="2" />
      <path d="M65 915V880" stroke="#0c28d8" strokeWidth="3" />
      <path d="M65 876l-3 10h6z" fill="#0c28d8" />
      <path d="M65 915l26 12" stroke="#d02828" strokeWidth="3" />
      <circle cx="65" cy="915" r="4" fill="#e8e8e8" />
      <g fontFamily="Liberation Sans" fontSize="10">
        <text x="61" y="873" fill="#1a38d0">Z</text>
        <text x="93" y="935" fill="#a03030">X</text>
        <text x="102" y="907" fill="#3a7a3a">Y</text>
      </g>
    </Model>
  );
}

export default function App() {
  return (
    <Page>
      <Global />
      <TitleBar>
        <TopShadow />
        <Logo>NX</Logo>
        <TitleSep />
        <TitleText>NX 10 - 加工 - [daoku1.prt（ 修改的 ）]</TitleText>
        <Brand>SIEMENS</Brand>
        <WinBtns $ml="26px" $mr={6} $gap={11}><WinIcons close="#222" /></WinBtns>
      </TitleBar>
      <MenuBar>
        <MenuGrip />
        <svg width="16" height="18" viewBox="0 0 16 18" fill="none"><path d="M6 1h2v15H6z" fill="#3a48a8" /><path d="M8 7h7M8 10h5M2 16h12" stroke="#8a7a3a" /><path d="M3 4h3M3 8h3M3 12h3" stroke="#c8a040" /></svg>
        <MenuList>
          {menu.map(([t, k, ml]) => <MenuItem key={t} $ml={ml}>{k ? <Lbl t={t} k={k} /> : t}</MenuItem>)}
        </MenuList>
        <WinBtns $ml="auto" $mr={7} $gap={6}><WinIcons close="#b5b5b5" /></WinBtns>
      </MenuBar>
      <ToolRow $h={34}>
        <ToolBox $w={1244} $pl={2}>
          {renderItems([':'])}
          <Tool $w={28}>{ICONS.globe}</Tool>
          <StartText>启动</StartText>
          <Caret />
          {renderItems(['doc', 'open', 'save', 'print', '+', '|', 'cut', 'copy', 'paste', 'del', '|', 'undo', 'v', '|', 'drill', 'v', '|', 'info', '|'])}
          <SearchBox>查找命令{ICONS.mag}</SearchBox>
          {renderItems(['_', '|', ':', 'fit', 'v', 'shade', 'v', 'cube', 'v', 'fold', 'fold2', 'v', 'win', 'v', '|', 'door1', 'door2', '_', '|', ':', 'layers', 'csys', 'v', '|', '+', 'hand', 'palette', '|', 'play', 'v', '|', '+', 'hatch', 'v', 'ruler', '_'], 31, 12)}
        </ToolBox>
      </ToolRow>
      <ToolRow $h={33}>
        <ToolBox $w={841} $pl={2}>
          {renderItems([':'])}
          <TextBtn $ml={7}><Lbl t="基准/点" k="D" /></TextBtn><Caret />
          <TextBtn $ml={3}><Lbl t="曲线" k="C" /></TextBtn><Caret />
          <TextBtn $ml={3}><Lbl t="编辑曲线" k="V" /></TextBtn><Caret />
          <TextBtn $ml={3}><Lbl t="派生曲线" k="U" /></TextBtn><Caret />
          {renderItems(['_', '|', ':', <Cube k="arrows" />, 'v', <Cube k="tri" />, 'v', <Cube k="x" />, <Cube k="doc" />, 'v', <Cube k="panel" />, 'v', <Cube k="dim" />, 'v', <Cube k="corner" />, <Cube k="tri" />, <Cube k="arrows" />, 'v', '_', '|', ':', 'spkGrid', 'spkDrill', 'spkBlock', 'spkWave', 'spkLines', 'v'], 31, 12.5)}
        </ToolBox>
      </ToolRow>
      <ToolRow $h={32}>
        <Plain>
          <Combo $w={133} $mr={8} />
          <Combo $w={140} $mr={3}>仅在工作部件内</Combo>
          {renderItems(['chain', '|'], 24)}
          {renderItems(['filt1', 'filt2', 'v', 'rot', 'filt3', '|', 'hex', 'dash', 'v', '|', 'box3', 'box4', '|', '+', 'snap1', 'snap2', 'snap3', 'snap4', 'snap5', 'snap6', 'snap7', 'snap8', 'snap9', 'snap10', '|', 'grid'], 23, 10)}
        </Plain>
        <EdgeCaret><Caret $w={6} /></EdgeCaret>
      </ToolRow>
      <Main>
        <Viewport>
          <CubeModel />
          <Triad />
          <Dialog>
            <DialogHead>将刀具导出至库</DialogHead>
            <DialogBody>
              <DialogIcon>
                <svg width="31" height="31" viewBox="0 0 31 31"><defs><radialGradient id="ib" cx=".4" cy=".25"><stop offset="0" stopColor="#6f96e8" /><stop offset="1" stopColor="#102f90" /></radialGradient></defs><circle cx="15.5" cy="15.5" r="15" fill="#d8dce4" stroke="#8a8e96" /><circle cx="15.5" cy="15.5" r="13" fill="url(#ib)" /><circle cx="15.5" cy="8.5" r="2" fill="#fff" /><path d="M13.5 12h4v12h-4z" fill="#f2f2f2" /></svg>
              </DialogIcon>
              <DialogCol>
                <DialogLine>ugt0290_1005 已在公制刀具库中创建</DialogLine>
                <DialogLine $mb={16}>未保存刀具部件文件</DialogLine>
                <DialogLine $ls={0.3}>Check the syslog for more details</DialogLine>
                <CheckRow><CheckBox />不要再显示此消息</CheckRow>
                <OkWrap><OkButton>确定(<u>O</u>)</OkButton></OkWrap>
              </DialogCol>
            </DialogBody>
          </Dialog>
        </Viewport>
        <Panel>
          <PanelTitle><WinBox />工序导航器 - 机床</PanelTitle>
          <Table>
            <Head>{heads.map((h, i) => <HeadCell key={h} $w={colW[i]} $last={i === 4}>{h}</HeadCell>)}</Head>
            {Array.from({ length: 35 }, (_, r) => (
              <Row key={r} $alt={r % 2 === 1}>
                {colW.map((w, c) => (
                  <Cell key={c} $w={w} $name={c === 0} $last={c === 4}>
                    {c === 0 && r === 0 && 'GENERIC_MACHINE'}
                    {c === 0 && r === 1 && <><Plus />{ICONS.folder}&nbsp;未用项</>}
                  </Cell>
                ))}
              </Row>
            ))}
            <HScroll>
              <ScrollArrow />
              <Thumb><Grips /></Thumb>
              <ScrollArrow $right />
            </HScroll>
          </Table>
          <Splitter />
          <Section>相依性<Chevron c="#2f8fc4" /></Section>
          <Section>细节<Chevron c="#2f8fc4" /></Section>
        </Panel>
        <SideStrip>
          {sideItems.map(s => <SideItem key={s.i} $h={s.h} $mt={s.mt} $pl={s.pl} $active={s.active}>{ICONS[s.i]}</SideItem>)}
        </SideStrip>
        <Badge>43</Badge>
        <Meter><MeterBars /></Meter>
      </Main>
      <BottomBar>
        <BottomBox>
          {renderItems([':', 'dimBox', 'dimBox2', 'v', 'contour', 'v', 'faceCut', 'v', 'swirl', 'v', 'slab', 'v', 'pocket', 'v', 'txt1', 'v', 'txt2', 'txt3', 'v'], 30, 13)}
        </BottomBox>
      </BottomBar>
      <StatusBar>{ICONS.max}</StatusBar>
      <FaintText />
      <Watermark width="86" height="94" viewBox="1630 940 86 94">
        <path d="M1673 945l36 21v40l-36 21-35-21v-40z" fill="#c4eafd" />
        <path d="M1673 945l36 21v40l-36 21z" fill="#98dcfb" />
        <path d="M1673 945l36 21-13 6-23-14z" fill="#d6f0fe" />
        <path d="M1638 1006l21-12 14 8 24-8 12 12-36 21z" fill="#82d2f9" />
        <path d="M1673 958l24 14v27l-24 14-24-14v-27z" fill="#fff" />
        <path d="M1673 967l16 9-16 9-16-9z" fill="#d8f1fe" />
        <path d="M1657 977l15 9v18l-15-9z" fill="#b2e2fb" />
        <path d="M1674 986l15-9v18l-15 9z" fill="#85cdf3" />
        <path d="M1650 972c8-12 22-12 30-8M1696 998c-6 12-20 14-30 8M1640 1000c-2-14 4-24 14-28" stroke="#fff" strokeWidth="1" fill="none" />
      </Watermark>
    </Page>
  );
}
